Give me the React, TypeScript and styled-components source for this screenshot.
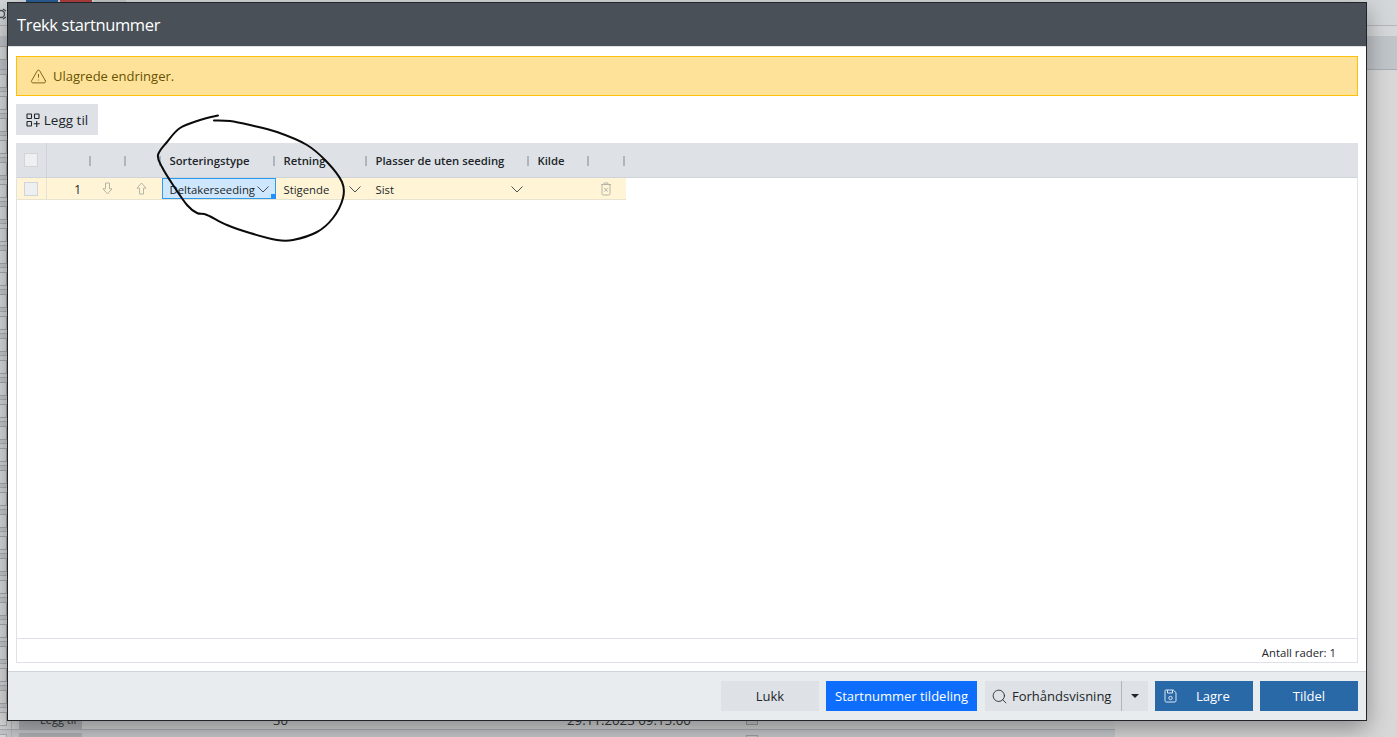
import React from "react";
import styled, { createGlobalStyle } from "styled-components";
import { Search, TriangleAlert } from "lucide-react";

const FONT = `"Open Sans", "Noto Sans", "Liberation Sans", sans-serif`;

// hand-drawn ring around the two columns, in page coordinates
const INK: [number, number][] = [
  [218, 115.5], [200, 120], [180, 128], [167, 142], [158, 155], [162, 167],
  [173, 185], [187, 205], [197, 213], [207, 215], [227, 225], [250, 233],
  [277, 240], [293, 240], [317, 232], [333, 218], [343, 198], [342, 182],
  [327, 162], [307, 145], [277, 132], [250, 125], [230, 121], [214, 120.5],
];

function inkPath(points: [number, number][]) {
  let d = `M${points[0][0]} ${points[0][1]}`;
  for (let i = 0; i < points.length - 1; i++) {
    const p0 = points[Math.max(i - 1, 0)];
    const p1 = points[i];
    const p2 = points[i + 1];
    const p3 = points[Math.min(i + 2, points.length - 1)];
    const c1x = p1[0] + (p2[0] - p0[0]) / 6;
    const c1y = p1[1] + (p2[1] - p0[1]) / 6;
    const c2x = p2[0] - (p3[0] - p1[0]) / 6;
    const c2y = p2[1] - (p3[1] - p1[1]) / 6;
    d += ` C${c1x} ${c1y} ${c2x} ${c2y} ${p2[0]} ${p2[1]}`;
  }
  return d;
}

const HEADERS = ["", "", "", "Sorteringstype", "Retning", "Plasser de uten seeding", "Kilde", ""];

function AddIcon() {
  return (
    <svg width="14" height="14" viewBox="0 0 14 14" fill="none" stroke="currentColor" strokeWidth="1.1">
      <rect x="1" y="1" width="4.5" height="4.5" rx="0.6" />
      <rect x="8.5" y="1" width="4.5" height="4.5" rx="0.6" />
      <rect x="1" y="8.5" width="4.5" height="4.5" rx="0.6" />
      <path d="M10.75 8v6M7.75 10.75h6" />
    </svg>
  );
}

function ArrowIcon({ up }: { up?: boolean }) {
  return (
    <svg width="11" height="13" viewBox="0 0 11 13" fill="none" stroke="#b5b5a8" strokeWidth="1" strokeLinejoin="round">
      <path
        d={up ? "M5.5 1L10 6.2H7.5V12H3.5V6.2H1z" : "M5.5 12L10 6.8H7.5V1H3.5V6.8H1z"}
      />
    </svg>
  );
}

function TrashIcon() {
  return (
    <svg width="12" height="14" viewBox="0 0 12 14" fill="none" stroke="#b5b5a8" strokeWidth="1">
      <path d="M1 2.5h10M4 2.5V1h4v1.5M2 2.5v9.2c0 .7.5 1.3 1.2 1.3h5.6c.7 0 1.2-.6 1.2-1.3V2.5" />
      <path d="M4.4 6l3.2 3.6M7.6 6L4.4 9.6" />
    </svg>
  );
}

function SaveIcon() {
  return (
    <svg width="13" height="14" viewBox="0 0 13 14" fill="none" stroke="#dbe6f1" strokeWidth="1">
      <path d="M1.8 1h7.4L12 3.6v8.2c0 .7-.5 1.2-1.2 1.2H2.2c-.7 0-1.2-.5-1.2-1.2V1.8C1 1.4 1.4 1 1.8 1z" />
      <path d="M3.5 1v3h5V1" />
      <circle cx="6.5" cy="9" r="1.7" />
    </svg>
  );
}

function Chevron() {
  return (
    <svg width="12" height="7" viewBox="0 0 12 7" fill="none" stroke="#4a4f54" strokeWidth="1">
      <path d="M0.5 0.5L6 6L11.5 0.5" />
    </svg>
  );
}

export default function App() {
  const rows = Array.from({ length: 31 }, (_, i) => i);
  return (
    <>
      <GlobalStyle />
      <Backdrop>
        <TopBar>
          <TopGlyph width="7" height="12" viewBox="0 0 7 12" fill="none" stroke="#4a4d50" strokeWidth="1.3">
            <circle cx="1" cy="6" r="3.5" />
            <path d="M3 1l3 2M3 11l3-2" />
          </TopGlyph>
          <TopButton $tone="#2a5f97" />
          <TopButton $tone="#b03f3f" />
          <TopButton $tone="#c4c7ca" />
        </TopBar>
        <SubBar />
        <HeadBand>
          <BackCheckCell>
            <BackCheck />
          </BackCheckCell>
        </HeadBand>
        {rows.map((i) => (
          <BackRow key={i} $alt={i % 2 === 0}>
            <BackCheckCell>
              <BackCheck />
            </BackCheckCell>
            {i >= 29 && (
              <BackButton>{i === 29 && "Legg til"}</BackButton>
            )}
            {i === 29 && (
              <>
                <BackCount>30</BackCount>
                <BackDate>29.11.2023 09:15:00</BackDate>
              </>
            )}
            {i >= 29 && <BackSmallCheck $last={i === 30} />}
          </BackRow>
        ))}
      </Backdrop>

      <Modal>
        <ModalHeader>Trekk startnummer</ModalHeader>
        <ModalBody>
          <Alert>
            <TriangleAlert size={17} strokeWidth={1.2} />
            Ulagrede endringer.
          </Alert>
          <Toolbar>
            <ToolButton>
              <AddIcon />
              Legg til
            </ToolButton>
          </Toolbar>
          <TableBox>
            <HeaderRow>
              <CheckCell $head>
                <Check />
              </CheckCell>
              {HEADERS.map((title, i) => (
                <HeaderCell key={i}>
                  {title}
                  <Resizer />
                </HeaderCell>
              ))}
            </HeaderRow>
            <DataRow>
              <CheckCell>
                <Check />
              </CheckCell>
              <NumberCell>1</NumberCell>
              <IconCell $pad={5}>
                <ArrowIcon />
              </IconCell>
              <IconCell $pad={7}>
                <ArrowIcon up />
              </IconCell>
              <SelectCell $focused>
                Deltakerseeding
                <Chevron />
                <FillHandle />
              </SelectCell>
              <SelectCell>
                Stigende
                <Chevron />
              </SelectCell>
              <SelectCell>
                Sist
                <Chevron />
              </SelectCell>
              <DataCell />
              <IconCell $pad={5}>
                <TrashIcon />
              </IconCell>
            </DataRow>
            <TableSpacer />
            <StatusBar>Antall rader: 1</StatusBar>
          </TableBox>
        </ModalBody>
        <ModalFooter>
          <FooterButton $variant="light">Lukk</FooterButton>
          <AssignButton>Startnummer tildeling</AssignButton>
          <SplitGroup>
            <PreviewButton>
              <Search size={17} strokeWidth={1.2} />
              Forhåndsvisning
            </PreviewButton>
            <CaretButton>
              <Caret />
            </CaretButton>
          </SplitGroup>
          <SaveButton $variant="dark">
            <SaveSlot>
              <SaveIcon />
            </SaveSlot>
            Lagre
          </SaveButton>
          <FooterButton $variant="dark">Tildel</FooterButton>
        </ModalFooter>
      </Modal>

      <InkLayer viewBox="0 0 1397 737" fill="none">
        <path d={inkPath(INK)} stroke="#0b0b0b" strokeWidth="2" strokeLinecap="round" strokeLinejoin="round" />
      </InkLayer>
    </>
  );
}

const GlobalStyle = createGlobalStyle`
  html, body {
    margin: 0;
    height: 737px;
    overflow: hidden;
    background: #d8d8d8;
    font-family: ${FONT};
    color: #212529;
  }
  * { box-sizing: border-box; }
`;

const Backdrop = styled.div`
  height: 737px;
  overflow: hidden;
  display: flex;
  flex-direction: column;
  background: #d8d8d8;
`;

const TopBar = styled.div`
  height: 26px;
  flex: none;
  display: flex;
  gap: 2px;
  background: #d3d7da;
  border-bottom: 1px solid #b4b7ba;
`;

const TopGlyph = styled.svg`
  margin: 8px 17px 0 0;
  flex: none;
`;

const TopButton = styled.div<{ $tone: string }>`
  width: 32px;
  height: 26px;
  background: ${(p) => p.$tone};
`;

const SubBar = styled.div`
  height: 10px;
  flex: none;
  background: #d6d7d8;
`;

const HeadBand = styled.div`
  height: 34px;
  flex: none;
  display: flex;
  background: #c0c5c9;
  border-bottom: 1px solid #a9adb2;
`;

const BackRow = styled.div<{ $alt: boolean }>`
  height: 22px;
  flex: none;
  width: 1115px;
  display: flex;
  align-items: flex-start;
  background: ${(p) => (p.$alt ? "#c6cacd" : "#d3d4d5")};
  border-bottom: 1px solid #adb0b3;
`;

const BackCheckCell = styled.div`
  width: 12px;
  height: 100%;
  flex: none;
  border-right: 1px solid #b4b7ba;
  display: flex;
  align-items: center;
`;

const BackCheck = styled.div`
  width: 12px;
  height: 14px;
  margin-left: -5px;
  flex: none;
  background: #d9dadb;
  border: 1px solid #a8aaac;
`;

const BackButton = styled.div`
  width: 63px;
  height: 18px;
  margin: 3px 0 0 7px;
  padding: 2px 0 0 21px;
  flex: none;
  background: #b0b3b5;
  color: #34373a;
  font-size: 11px;
  line-height: 14px;
`;

const BackCount = styled.div`
  width: 40px;
  margin-left: 191px;
  flex: none;
  padding-top: 5px;
  font-size: 13px;
  line-height: 14px;
  color: #34373a;
`;

const BackDate = styled.div`
  width: 140px;
  margin-left: 254px;
  flex: none;
  padding-top: 5px;
  font-size: 13.3px;
  line-height: 14px;
  white-space: nowrap;
  color: #34373a;
`;

const BackSmallCheck = styled.div<{ $last: boolean }>`
  width: 12px;
  height: 12px;
  margin: 5px 0 0 ${(p) => (p.$last ? "664px" : "39px")};
  flex: none;
  background: #c8c9ca;
  border: 1px solid #9ea0a2;
`;

const Modal = styled.div`
  position: absolute;
  top: 2px;
  left: 7px;
  width: 1360px;
  height: 719px;
  display: flex;
  flex-direction: column;
  background: #fff;
  border: 1px solid #212529;
  box-shadow: 0 8px 22px rgba(0, 0, 0, 0.35);
`;

const ModalHeader = styled.div`
  height: 44px;
  flex: none;
  display: flex;
  align-items: center;
  padding-left: 9px;
  background: #495057;
  border-bottom: 1px solid #dee2e6;
  color: #fff;
  font-size: 16.5px;
  letter-spacing: -0.35px;
`;

const ModalBody = styled.div`
  flex: 1;
  min-height: 0;
  display: flex;
  flex-direction: column;
  gap: 8px;
  padding: 9px 8px 8px;
`;

const Alert = styled.div`
  height: 40px;
  flex: none;
  display: flex;
  align-items: center;
  gap: 6px;
  padding-left: 13px;
  background: #ffe29a;
  border: 1px solid #ffc107;
  color: #665200;
  font-size: 13px;
`;

const Toolbar = styled.div`
  flex: none;
  display: flex;
`;

const ToolButton = styled.button`
  height: 31px;
  width: 82px;
  display: flex;
  align-items: center;
  justify-content: center;
  gap: 4px;
  padding: 0;
  border: 0;
  background: #dee2e6;
  color: #212529;
  font: 13.5px ${FONT};
`;

const TableBox = styled.div`
  flex: 1;
  min-height: 0;
  display: flex;
  flex-direction: column;
  border: 1px solid #dee2e6;
  border-top: 0;
`;

const GRID = "30px 45px 35px 35px 114px 92px 162px 60px 36px";

const HeaderRow = styled.div`
  height: 35px;
  flex: none;
  display: grid;
  grid-template-columns: ${GRID};
  background: #dee2e6;
  border-bottom: 1px solid #ced4da;
`;

const DataRow = styled.div`
  height: 22px;
  flex: none;
  width: max-content;
  display: grid;
  grid-template-columns: ${GRID};
  background: #fff5d6;
  border-bottom: 1px solid #e8e3d0;
  font-size: 11.3px;
`;

const CheckCell = styled.div<{ $head?: boolean }>`
  display: flex;
  align-items: center;
  justify-content: center;
  padding-right: 1px;
  border-right: 1px solid ${(p) => (p.$head ? "#ced4da" : "#e8e3d0")};
`;

const Check = styled.div`
  width: 14px;
  height: 14px;
  background: #eeeff0;
  border: 1px solid #ced4da;
`;

const HeaderCell = styled.div`
  display: flex;
  align-items: center;
  padding: 1px 1px 0 7.5px;
  font-size: 11.3px;
  font-weight: 600;
  white-space: nowrap;
`;

const Resizer = styled.span`
  width: 2px;
  height: 10px;
  margin-left: auto;
  flex: none;
  background: #adb5bd;
`;

const DataCell = styled.div`
  display: flex;
  align-items: center;
`;

const NumberCell = styled(DataCell)`
  justify-content: flex-end;
  padding: 1px 11px 0 0;
  font-size: 12px;
`;

const IconCell = styled(DataCell)<{ $pad: number }>`
  justify-content: center;
  padding-right: ${(p) => p.$pad}px;
`;

const SelectCell = styled(DataCell)<{ $focused?: boolean }>`
  position: relative;
  justify-content: space-between;
  padding: 1px 7px 0 7.5px;
  white-space: nowrap;
  background: ${(p) => (p.$focused ? "#cfe7fd" : "transparent")};
  box-shadow: ${(p) => (p.$focused ? "inset 0 0 0 1px #2d9bf0" : "none")};
`;

const FillHandle = styled.span`
  position: absolute;
  right: 0;
  bottom: 0;
  width: 5px;
  height: 5px;
  background: #1e90ff;
`;

const TableSpacer = styled.div`
  flex: 1;
`;

const StatusBar = styled.div`
  height: 24px;
  flex: none;
  display: flex;
  align-items: center;
  justify-content: flex-end;
  padding: 3px 21px 0 0;
  border-top: 1px solid #dee2e6;
  font-size: 11.3px;
`;

const ModalFooter = styled.div`
  height: 49px;
  flex: none;
  display: flex;
  justify-content: flex-end;
  gap: 7px;
  padding: 9px 8px 0 0;
  background: #e9ecef;
  border-top: 1px solid #ced4da;
`;

const FooterButton = styled.button<{ $variant: "light" | "dark" }>`
  width: 98px;
  height: 30px;
  display: flex;
  align-items: center;
  justify-content: center;
  padding: 0;
  border: 0;
  background: ${(p) => (p.$variant === "dark" ? "#2a69a8" : "#dee2e6")};
  color: ${(p) => (p.$variant === "dark" ? "#fff" : "#212529")};
  font: 13px ${FONT};
`;

const SaveButton = styled(FooterButton)`
  justify-content: flex-start;
  padding-left: 9px;
`;

const SaveSlot = styled.span`
  width: 32px;
  display: flex;
`;

const AssignButton = styled.button`
  width: 151px;
  height: 30px;
  padding: 0;
  border: 0;
  background: #0d6efd;
  color: #fff;
  font: 13px ${FONT};
`;

const SplitGroup = styled.div`
  display: flex;
  height: 30px;
  margin-left: 1px;
`;

const PreviewButton = styled.button`
  width: 137px;
  height: 30px;
  display: flex;
  align-items: center;
  gap: 4px;
  padding: 0 0 0 6px;
  border: 0;
  border-right: 1px solid #adb5bd;
  background: #dee2e6;
  color: #212529;
  font: 13px ${FONT};
`;

const CaretButton = styled.button`
  width: 26px;
  height: 30px;
  display: flex;
  align-items: center;
  justify-content: center;
  padding: 0;
  border: 0;
  background: #dee2e6;
`;

const Caret = styled.span`
  width: 0;
  height: 0;
  border-left: 4px solid transparent;
  border-right: 4px solid transparent;
  border-top: 4px solid #212529;
`;

const InkLayer = styled.svg`
  position: absolute;
  top: 0;
  left: 0;
  width: 1397px;
  height: 737px;
  pointer-events: none;
`;
